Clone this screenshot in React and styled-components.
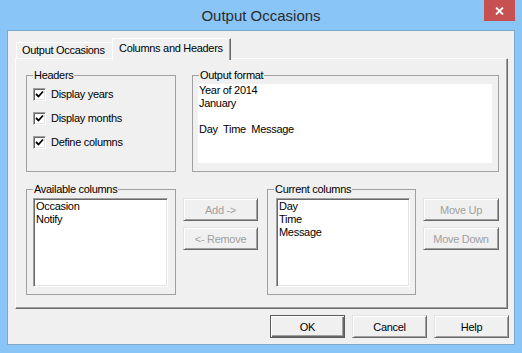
import React from "react"
import styled, { createGlobalStyle } from "styled-components"

const GlobalStyle = createGlobalStyle`
    html, body {
        margin: 0;
        padding: 0;
        background: #8ac5f8;
    }
    body {
        font-family: "Liberation Sans", Arial, sans-serif;
        font-size: 11px;
        letter-spacing: -0.3px;
        color: #000;
    }
`

const Window = styled.div`
    width: 522px;
    height: 353px;
    box-sizing: border-box;
    padding: 0 8px 9px 8px;
    background: #8ac5f8;
    display: flex;
    flex-direction: column;
`

const TitleBar = styled.div`
    height: 31px;
    flex: none;
    display: grid;
    grid-template-columns: 1fr auto 1fr;
    align-items: start;
`

const Title = styled.div`
    grid-column: 2;
    margin-top: 7px;
    font-size: 15px;
    line-height: 17px;
    letter-spacing: 0;
    color: #2b2b2b;
`

const CloseButton = styled.div`
    grid-column: 3;
    justify-self: end;
    margin-right: -1px;
    width: 31px;
    height: 21px;
    background: #c75050;
    display: flex;
    align-items: center;
    justify-content: center;
`

const Client = styled.div`
    flex: 1;
    background: #f0f0f0;
    box-shadow: 0 0 0 1px #7ea7cc;
    padding: 7px 0 0 7px;
    display: flex;
    flex-direction: column;
`

const TabStrip = styled.div`
    height: 20px;
    display: flex;
    align-items: flex-end;
    padding-left: 1px;
`

const Tab = styled.div`
    box-sizing: border-box;
    width: ${({ $width }) => $width}px;
    height: ${({ $active }) => $active ? "22px" : "16px"};
    margin-bottom: ${({ $active }) => $active ? "-2px" : "0"};
    padding-left: ${({ $active }) => $active ? "6px" : "5px"};
    line-height: ${({ $active }) => $active ? "18px" : "15px"};
    border-top: 1px solid #fff;
    border-left: 1px solid #fff;
    border-right: ${({ $active }) => $active ? "1px solid #696969" : "none"};
    box-shadow: ${({ $active }) => $active ? "inset -1px 0 #a0a0a0" : "none"};
    background: #f0f0f0;
    position: relative;
    z-index: ${({ $active }) => $active ? 1 : 0};
    white-space: nowrap;
`

const Pane = styled.div`
    width: 493px;
    height: 251px;
    box-sizing: border-box;
    border: 1px solid;
    border-color: #fff #696969 #696969 #fff;
    box-shadow: inset -1px -1px #a0a0a0;
    padding: 10px 0 0 10px;
    display: grid;
    grid-template-rows: 103px 112px;
    row-gap: 11px;
`

const Row = styled.div`
    display: flex;
    align-items: stretch;
`

const Group = styled.fieldset`
    margin: 0 0 0 ${({ $gap }) => $gap || 0}px;
    padding: 0;
    min-width: 0;
    width: ${({ $width }) => $width}px;
    box-sizing: border-box;
    border: 1px solid #a0a0a0;
    flex: none;
`

const Legend = styled.legend`
    margin-left: 6px;
    padding: 0 1px;
    line-height: 13px;
`

const CheckList = styled.div`
    padding-left: 6px;
    display: flex;
    flex-direction: column;
`

const CheckRow = styled.label`
    height: 24px;
    display: flex;
    align-items: center;
    gap: 5px;
`

const CheckBox = styled.span`
    width: 13px;
    height: 13px;
    box-sizing: border-box;
    background: #fff;
    border: 1px solid;
    border-color: #a0a0a0 #fff #fff #a0a0a0;
    box-shadow: inset 1px 1px #696969, inset -1px -1px #e3e3e3;
    display: flex;
    align-items: center;
    justify-content: center;
`

const FormatBox = styled.div`
    margin: 2px 6px 0 5px;
    height: 79px;
    background: #fff;
    padding: 0 1px;
    line-height: 13px;
    white-space: pre;
`

const ListBox = styled.div`
    margin: 2px ${({ $mr }) => $mr}px 0 ${({ $ml }) => $ml}px;
    height: 89px;
    box-sizing: border-box;
    background: #fff;
    border: 1px solid;
    border-color: #a0a0a0 #fff #fff #a0a0a0;
    box-shadow: inset 1px 1px #696969, inset -1px -1px #e3e3e3;
    padding: 1px 2px;
    line-height: 13px;
`

const ButtonStack = styled.div`
    margin-left: ${({ $gap }) => $gap}px;
    padding-top: 15px;
    display: flex;
    flex-direction: column;
    gap: 6px;
`

const Button = styled.button`
    width: ${({ $width }) => $width || 75}px;
    height: 23px;
    padding: 0;
    box-sizing: border-box;
    font-family: inherit;
    font-size: 11px;
    letter-spacing: -0.3px;
    background: #f0f0f0;
    color: ${({ disabled }) => disabled ? "#a0a0a0" : "#000"};
    border: 1px solid;
    border-color: ${({ $default }) => $default ? "#5a5a5a" : "#e3e3e3 #696969 #696969 #e3e3e3"};
    box-shadow: ${({ $default }) => $default
        ? "inset 1px 1px #fff, inset -1px -1px #696969, inset -2px -2px #a0a0a0"
        : "inset 1px 1px #fff, inset -1px -1px #a0a0a0"};
`

const ButtonBar = styled.div`
    margin-top: 6px;
    padding-right: 5px;
    display: flex;
    justify-content: flex-end;
    gap: 7px;
`

const Check = () => (
    <svg width="9" height="9" viewBox="0 0 9 9">
        <path d="M1 4 L3.5 6.5 L8 1.5" fill="none" stroke="#000" strokeWidth="1.8" />
    </svg>
)

const headers = [ "Display years", "Display months", "Define columns" ]

const App = () => {
    return (
        <>
            <GlobalStyle />
            <Window>
                <TitleBar>
                    <Title>Output Occasions</Title>
                    <CloseButton>
                        <svg width="9" height="8" viewBox="0 0 9 8">
                            <path d="M1 0.5 L8 7.5 M8 0.5 L1 7.5" stroke="#fff" strokeWidth="1.8" />
                        </svg>
                    </CloseButton>
                </TitleBar>
                <Client>
                    <TabStrip>
                        <Tab $width={ 96 }>Output Occasions</Tab>
                        <Tab $active $width={ 119 }>Columns and Headers</Tab>
                    </TabStrip>
                    <Pane>
                        <Row>
                            <Group $width={ 150 }>
                                <Legend>Headers</Legend>
                                <CheckList>
                                    { headers.map( item => (
                                        <CheckRow key={ item }>
                                            <CheckBox><Check /></CheckBox>
                                            { item }
                                        </CheckRow>
                                    )) }
                                </CheckList>
                            </Group>
                            <Group $width={ 307 } $gap={ 16 }>
                                <Legend>Output format</Legend>
                                <FormatBox>{ "Year of 2014\nJanuary\n\nDay  Time  Message" }</FormatBox>
                            </Group>
                        </Row>
                        <Row>
                            <Group $width={ 150 }>
                                <Legend>Available columns</Legend>
                                <ListBox $ml={ 6 } $mr={ 7 }>
                                    <div>Occasion</div>
                                    <div>Notify</div>
                                </ListBox>
                            </Group>
                            <ButtonStack $gap={ 7 }>
                                <Button disabled>Add -&gt;</Button>
                                <Button disabled>&lt;- Remove</Button>
                            </ButtonStack>
                            <Group $width={ 149 } $gap={ 9 }>
                                <Legend>Current columns</Legend>
                                <ListBox $ml={ 8 } $mr={ 5 }>
                                    <div>Day</div>
                                    <div>Time</div>
                                    <div>Message</div>
                                </ListBox>
                            </Group>
                            <ButtonStack $gap={ 7 }>
                                <Button disabled $width={ 76 }>Move Up</Button>
                                <Button disabled $width={ 76 }>Move Down</Button>
                            </ButtonStack>
                        </Row>
                    </Pane>
                    <ButtonBar>
                        <Button $default>OK</Button>
                        <Button>Cancel</Button>
                        <Button>Help</Button>
                    </ButtonBar>
                </Client>
            </Window>
        </>
    )
}

export default App
